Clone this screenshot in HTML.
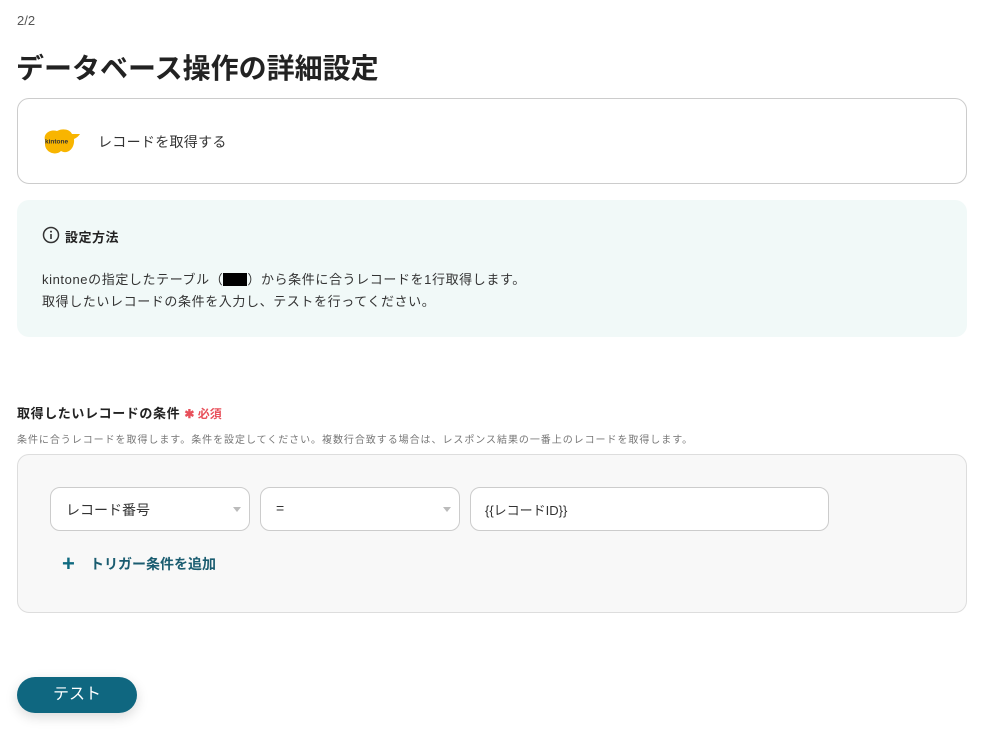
<!DOCTYPE html>
<html><head><meta charset="utf-8"><style>
*{box-sizing:border-box;margin:0;padding:0}
body{width:984px;height:732px;background:#fff;font-family:"Liberation Sans","Noto Sans CJK JP",sans-serif;color:#333;position:relative;overflow:hidden}
.abs{position:absolute}
</style></head><body>
<div class="abs" style="left:17px;top:13px;font-size:13px;color:#555">2/2</div>
<div class="abs" style="left:16px;top:47px;font-size:28px;font-weight:bold;color:#222">データベース操作の詳細設定</div>
<div class="abs" style="left:17px;top:98px;width:950px;height:86px;border:1px solid #ccc;border-radius:12px"></div>
<svg class="abs" style="left:42px;top:128px" width="40" height="28" viewBox="0 0 40 28"><path d="M3 12 C1 5 9 1 15 3 C20 0 28 1 30 6 L38 6 C36 9 34 10 32 11 C33 20 26 27 19 23 C14 28 4 25 3 17 Z" fill="#f8b500"/><text x="3" y="15.5" font-size="6.5" font-weight="bold" fill="#333" font-family="Liberation Sans">kintone</text></svg>
<div class="abs" style="left:98px;top:132px;font-size:14px;color:#333;letter-spacing:0.3px">レコードを取得する</div>
<div class="abs" style="left:17px;top:200px;width:950px;height:137px;background:#f1f9f8;border-radius:12px"></div>
<svg class="abs" style="left:42px;top:226px" width="18" height="18" viewBox="0 0 18 18"><circle cx="9" cy="9" r="7.5" fill="none" stroke="#333" stroke-width="1.5"/><rect x="8.2" y="8" width="1.6" height="5" fill="#333"/><circle cx="9" cy="5.6" r="1" fill="#333"/></svg>
<div class="abs" style="left:65px;top:227px;font-size:13px;font-weight:bold;color:#222;letter-spacing:0.5px">設定方法</div>
<div class="abs" style="left:42px;top:269px;font-size:13px;line-height:22px;color:#333;letter-spacing:0.6px">kintoneの指定したテーブル（<span style="display:inline-block;width:24px;height:13px;background:#000;vertical-align:-2px"></span>）から条件に合うレコードを1行取得します。<br>取得したいレコードの条件を入力し、テストを行ってください。</div>
<div class="abs" style="left:17px;top:403px;font-size:13px;font-weight:bold;color:#222;letter-spacing:0.6px">取得したいレコードの条件 <span style="color:#e8505b;font-size:12px;letter-spacing:0">✱ 必須</span></div>
<div class="abs" style="left:17px;top:431px;font-size:10px;color:#777;letter-spacing:0.95px">条件に合うレコードを取得します。条件を設定してください。複数行合致する場合は、レスポンス結果の一番上のレコードを取得します。</div>
<div class="abs" style="left:17px;top:454px;width:950px;height:159px;background:#f8f8f8;border:1px solid #ddd;border-radius:12px"></div>
<div class="abs" style="left:50px;top:487px;width:200px;height:44px;background:#fff;border:1px solid #ccc;border-radius:10px;font-size:14px;padding:12px 0 0 15px">レコード番号<span class="abs" style="right:8px;top:19px;border:4px solid transparent;border-top:5px solid #bbb"></span></div>
<div class="abs" style="left:260px;top:487px;width:200px;height:44px;background:#fff;border:1px solid #ccc;border-radius:10px;font-size:14px;padding:12px 0 0 15px">=<span class="abs" style="right:8px;top:19px;border:4px solid transparent;border-top:5px solid #bbb"></span></div>
<div class="abs" style="left:470px;top:487px;width:359px;height:44px;background:#fff;border:1px solid #ccc;border-radius:10px;font-size:13px;padding:12px 0 0 14px">{{レコードID}}</div>
<div class="abs" style="left:62px;top:551px;font-size:22px;color:#0f6a80;font-weight:bold">+</div>
<div class="abs" style="left:90px;top:554px;font-size:14px;font-weight:bold;color:#1a5c70">トリガー条件を追加</div>
<div class="abs" style="left:17px;top:677px;width:120px;height:36px;background:#0f6780;border-radius:18px;color:#fff;font-size:16px;text-align:center;line-height:36px;box-shadow:0 4px 12px rgba(0,0,0,0.15)">テスト</div>
</body></html>
